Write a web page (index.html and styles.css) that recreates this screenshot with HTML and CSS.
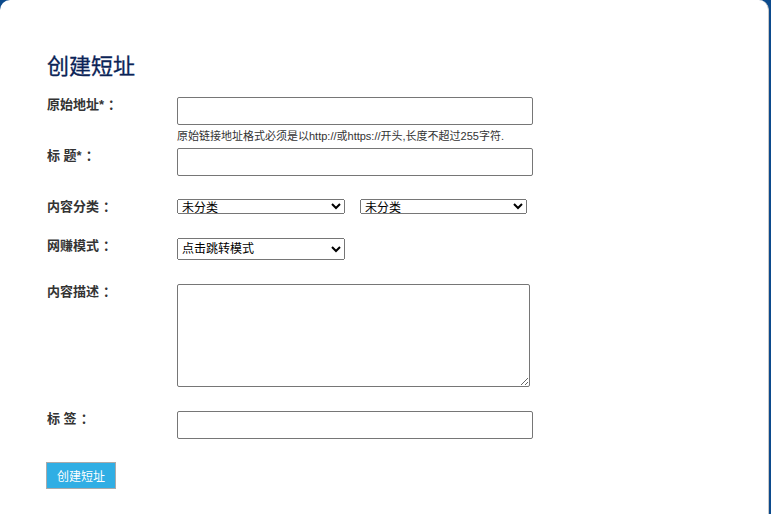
FILE: index.html
```html
<!DOCTYPE html>
<html lang="zh-CN">
<head>
<meta charset="utf-8">
<title>创建短址</title>
<link rel="stylesheet" href="styles.css">
</head>
<body>
<div class="panel">
  <h1 class="title">创建短址</h1>
  <form class="form">
    <div class="row">
      <label class="label">原始地址*<span class="colon">：</span></label>
      <div class="field">
        <input class="text" type="text">
        <div class="hint">原始链接地址格式必须是以http://或https://开头,长度不超过255字符.</div>
      </div>
    </div>
    <div class="row row-title">
      <label class="label">标 题*<span class="colon">：</span></label>
      <div class="field"><input class="text" type="text"></div>
    </div>
    <div class="row row-cat">
      <label class="label">内容分类<span class="colon">：</span></label>
      <div class="field selects">
        <select class="sel sel-small"><option>未分类</option></select>
        <select class="sel sel-small sel-second"><option>未分类</option></select>
      </div>
    </div>
    <div class="row row-gap">
      <label class="label">网赚模式<span class="colon">：</span></label>
      <div class="field"><select class="sel sel-mode"><option>点击跳转模式</option></select></div>
    </div>
    <div class="row row-gap">
      <label class="label">内容描述<span class="colon">：</span></label>
      <div class="field"><textarea class="area"></textarea></div>
    </div>
    <div class="row row-gap">
      <label class="label">标 签<span class="colon">：</span></label>
      <div class="field"><input class="text" type="text"></div>
    </div>
    <div class="actions">
      <button class="btn" type="button">创建短址</button>
    </div>
  </form>
</div>
</body>
</html>
```

FILE: styles.css
```css
html, body {
  margin: 0;
  padding: 0;
  height: 100%;
  overflow: hidden;
}
body {
  background: #0c4a8c;
  font-family: "Liberation Sans", "Noto Sans CJK SC", sans-serif;
  color: #333;
}
.panel {
  background: #fff;
  margin-right: 2px;
  border-right: 1px solid #c8c8c8;
  border-radius: 10px 10px 0 0;
  min-height: 600px;
  padding: 52px 0 0 47px;
  box-sizing: border-box;
}
.title {
  margin: 0;
  font-size: 22px;
  line-height: 30px;
  font-weight: normal;
  color: #0b2457;
  -webkit-text-stroke: 0.3px #0b2457;
}
.form {
  display: flex;
  flex-direction: column;
  margin-top: 15px;
}
.row {
  display: flex;
  align-items: flex-start;
}
.row-title { margin-top: 4px; }
.row-cat { margin-top: 23px; }
.row-gap { margin-top: 24px; }
.label {
  width: 130px;
  flex: none;
  font-size: 13px;
  line-height: 15px;
  max-height: 15px;
  font-weight: bold;
  color: #333;
  white-space: pre;
}
.colon {
  margin-left: 4px;
}
.field {
  display: flex;
  flex-direction: column;
}
.text {
  width: 356px;
  height: 28px;
  box-sizing: border-box;
  border: 1px solid #767676;
  border-radius: 2px;
  padding: 0 4px;
  margin: 0;
  font: 12px "Liberation Sans", "Noto Sans CJK SC", sans-serif;
}
.hint {
  margin-top: 3px;
  font-size: 11px;
  line-height: 16px;
  color: #333;
}
.selects {
  flex-direction: row;
  gap: 15px;
}
.sel {
  margin: 0;
  font-family: "Liberation Sans", "Noto Sans CJK SC", sans-serif;
  font-size: 12px;
  line-height: 13px;
  color: #000;
  box-sizing: border-box;
  padding: 0;
}
.sel-small {
  width: 168px;
  height: 15px;
}
.sel-second { width: 167px; }
.sel-mode {
  width: 168px;
  height: 22px;
}
.area {
  width: 353px;
  height: 103px;
  box-sizing: border-box;
  border: 1px solid #767676;
  border-radius: 2px;
  margin: 0;
  padding: 2px;
}
.actions {
  margin-top: 23px;
}
.btn {
  width: 70px;
  height: 27px;
  margin-left: -1px;
  background: #30aee4;
  border: 1px solid #aaa;
  color: #fff;
  font: 12px "Liberation Sans", "Noto Sans CJK SC", sans-serif;
  padding: 0;
}
```
